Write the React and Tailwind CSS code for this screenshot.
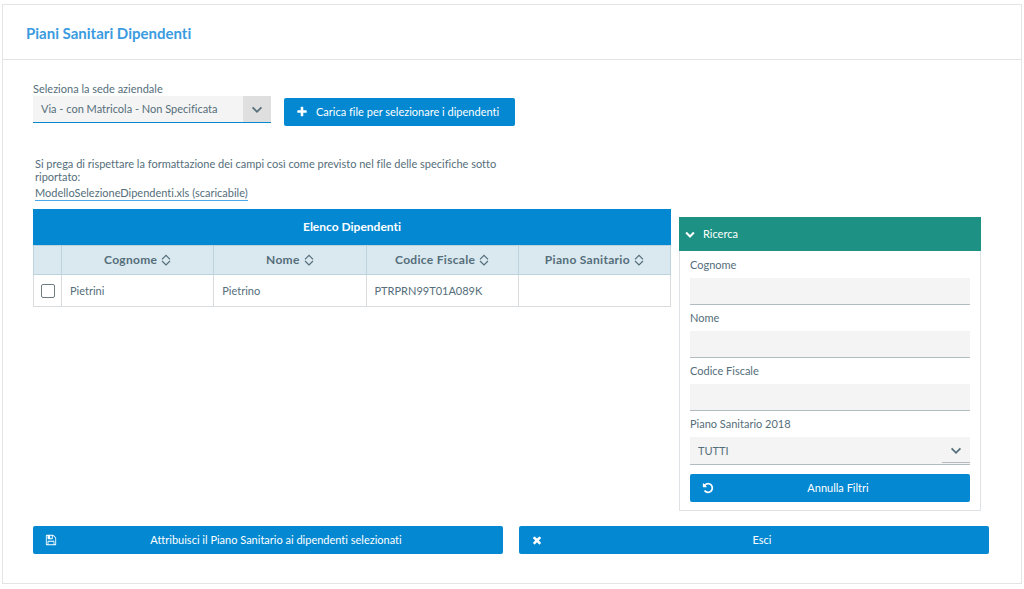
import React, { useState } from "react";
import clsx from "clsx";

const ICONS = {
  plus: "M1600 736v192q0 40-28 68t-68 28h-416v416q0 40-28 68t-68 28h-192q-40 0-68-28t-28-68v-416h-416q-40 0-68-28t-28-68v-192q0-40 28-68t68-28h416v-416q0-40 28-68t68-28h192q40 0 68 28t28 68v416h416q40 0 68 28t28 68z",
  close:
    "M1490 1322q0 40-28 68l-136 136q-28 28-68 28t-68-28l-294-294-294 294q-28 28-68 28t-68-28l-136-136q-28-28-28-68t28-68l294-294-294-294q-28-28-28-68t28-68l136-136q28-28 68-28t68 28l294 294 294-294q28-28 68-28t68 28l136 136q28 28 28 68t-28 68l-294 294 294 294q28 28 28 68z",
  undo: "M1664 896q0 156-61 298t-164 245-245 164-298 61q-172 0-327-72.5t-264-204.5q-7-10-6.5-22.5t8.5-20.5l137-138q10-9 25-9 16 2 23 12 73 95 179 147t225 52q104 0 198.5-40.5t163.5-109.5 109.5-163.5 40.5-198.5-40.5-198.5-109.5-163.5-163.5-109.5-198.5-40.5q-98 0-188 35.5t-160 101.5l137 138q31 30 14 69-17 40-59 40h-448q-26 0-45-19t-19-45v-448q0-42 40-59 39-17 69 14l130 129q107-101 244.5-156.5t284.5-55.5q156 0 298 61t245 164 164 245 61 298z",
  save: "M512 1536h768v-384h-768v384zm896 0h128v-896q0-14-10-38.5t-20-34.5l-281-281q-10-10-34-20t-39-10v416q0 40-28 68t-68 28h-576q-40 0-68-28t-28-68v-416h-128v1280h128v-416q0-40 28-68t68-28h832q40 0 68 28t28 68v416zm-384-928v-320q0-13-9.5-22.5t-22.5-9.5h-192q-13 0-22.5 9.5t-9.5 22.5v320q0 13 9.5 22.5t22.5 9.5h192q13 0 22.5-9.5t9.5-22.5zm640 32v928q0 40-28 68t-68 28h-1344q-40 0-68-28t-28-68v-1344q0-40 28-68t68-28h928q40 0 88 20t76 48l280 280q28 28 48 76t20 88z",
  chevron:
    "M1683 808l-742 741q-19 19-45 19t-45-19l-742-741q-19-19-19-45.5t19-45.5l166-165q19-19 45-19t45 19l531 531 531-531q19-19 45-19t45 19l166 165q19 19 19 45.5t-19 45.5z",
};

const Icon = ({ name, className }) => (
  <svg
    viewBox="0 0 1792 1792"
    fill="currentColor"
    aria-hidden="true"
    className={clsx("shrink-0", className)}
  >
    <path d={ICONS[name]} />
  </svg>
);

const ArrowDown = () => (
  <svg
    viewBox="0 0 12 8"
    fill="none"
    stroke="currentColor"
    strokeWidth="1.8"
    aria-hidden="true"
    className="mt-0.5 h-2 w-3"
  >
    <path d="M1.6 1.4 6 5.8l4.4-4.4" />
  </svg>
);

const SortIcon = () => (
  <svg
    viewBox="0 0 10 12"
    fill="none"
    stroke="currentColor"
    strokeWidth="1.2"
    aria-hidden="true"
    className="h-3 w-2.5"
  >
    <path d="M1 5.4 5 1.4l4 4M1 7l4 4 4-4" />
  </svg>
);

const WideButton = ({ icon, children }) => (
  <button
    type="button"
    className="flex h-7 w-full items-center rounded-xs bg-[#0388d1] pr-2 pl-3 text-white"
  >
    <Icon name={icon} className="size-3" />
    <span className="flex-1">{children}</span>
  </button>
);

const columns = ["Cognome", "Nome", "Codice Fiscale", "Piano Sanitario"];

const employees = [
  {
    surname: "Pietrini",
    name: "Pietrino",
    fiscalCode: "PTRPRN99T01A089K",
    plan: "",
  },
];

const filters = [
  { id: "surname", label: "Cognome" },
  { id: "name", label: "Nome" },
  { id: "fiscalCode", label: "Codice Fiscale" },
];

const emptyFilters = { surname: "", name: "", fiscalCode: "" };

const EmployeesTable = ({ rows }) => (
  <table className="w-full table-fixed border-collapse">
    <caption className="h-9 bg-[#0388d1] text-center text-[12px] leading-9 font-bold text-white">
      Elenco Dipendenti
    </caption>
    <thead>
      <tr className="h-[29px] bg-[#dae8ef] text-[12px]">
        <th className="w-7 border border-[#bdd3dd]" />
        {columns.map((column) => (
          <th
            key={column}
            className="border border-[#bdd3dd] p-0 font-bold tracking-wide"
          >
            <span className="flex items-center justify-center gap-1">
              {column}
              <SortIcon />
            </span>
          </th>
        ))}
      </tr>
    </thead>
    <tbody>
      {rows.map((row) => (
        <tr key={row.fiscalCode} className="h-8">
          <td className="border border-[#d8dcde] p-0">
            <input
              type="checkbox"
              aria-label={`Seleziona ${row.surname} ${row.name}`}
              className="mx-auto block size-3.5 appearance-none rounded-xs border border-[#6f7c84] bg-white checked:bg-[#0388d1]"
            />
          </td>
          <td className="border border-[#d8dcde] px-2 py-0">{row.surname}</td>
          <td className="border border-[#d8dcde] px-2 py-0">{row.name}</td>
          <td className="border border-[#d8dcde] px-2 py-0">
            {row.fiscalCode}
          </td>
          <td className="border border-[#d8dcde] px-2 py-0">{row.plan}</td>
        </tr>
      ))}
    </tbody>
  </table>
);

const SearchPanel = ({ values, onChange }) => (
  <section>
    <h2 className="flex h-[34px] items-center gap-2 bg-[#1d9284] px-1.5 text-white">
      <Icon name="chevron" className="size-2.5" />
      Ricerca
    </h2>
    <div className="border border-t-0 border-[#dfe3e5] px-2.5 pt-1.5 pb-2">
      <div className="flex flex-col gap-[5px]">
        {filters.map(({ id, label }) => (
          <div key={id} className="flex flex-col gap-[5px]">
            <label htmlFor={id} className="leading-4">
              {label}
            </label>
            <input
              id={id}
              type="text"
              value={values[id]}
              onChange={(e) => onChange(id, e.target.value)}
              className="h-[27px] w-full border-b border-[#b0bcc2] bg-[#f4f4f4] px-2 outline-none"
            />
          </div>
        ))}
        <div className="flex flex-col gap-[5px]">
          <label htmlFor="plan" className="leading-4">
            Piano Sanitario 2018
          </label>
          <div className="relative">
            <select
              id="plan"
              className="block h-7 w-full appearance-none border-b border-[#b0bcc2] bg-[#f4f4f4] px-2 outline-none"
            >
              <option>TUTTI</option>
            </select>
            <span className="pointer-events-none absolute top-0 right-0 flex h-[26px] w-7 items-center justify-center border-b border-[#b0bcc2]">
              <ArrowDown />
            </span>
          </div>
        </div>
      </div>
      <div className="mt-[9px]">
        <WideButton icon="undo">Annulla Filtri</WideButton>
      </div>
    </div>
  </section>
);

const App = () => {
  const [values, setValues] = useState(emptyFilters);

  const changeFilter = (id, value) => setValues({ ...values, [id]: value });

  return (
    <main className="bg-white px-0.5 py-1 font-['Lato',sans-serif] text-[11px] leading-[14px] text-[#546e7a] [font-variant-ligatures:none]">
      <div className="border border-[#e2e4e5]">
        <h1 className="border-b border-[#e2e4e5] px-[23px] pt-[18px] pb-4 text-[15px] leading-5 font-bold text-[#3a9be0]">
          Piani Sanitari Dipendenti
        </h1>
        <div className="pt-[22px] pr-8 pb-[29px] pl-[30px]">
          <div className="flex items-end gap-[13px]">
            <div className="w-[238px]">
              <label htmlFor="office" className="block">
                Seleziona la sede aziendale
              </label>
              <div className="relative">
                <select
                  id="office"
                  className="block h-[27px] w-full appearance-none border-b border-[#0388d1] bg-[#f4f4f4] pr-8 pl-2 outline-none"
                >
                  <option>Via - con Matricola - Non Specificata</option>
                </select>
                <span className="pointer-events-none absolute top-0 right-0 flex h-[26px] w-7 items-center justify-center bg-[#dfdfdf]">
                  <ArrowDown />
                </span>
              </div>
            </div>
            <button
              type="button"
              className="-mb-[3px] flex h-7 items-center gap-2 rounded-xs bg-[#0388d1] pr-4 pl-3 text-white"
            >
              <Icon name="plus" className="size-3" />
              Carica file per selezionare i dipendenti
            </button>
          </div>

          <div className="mt-[34px] max-w-[480px] px-0.5">
            <p className="leading-[13px]">
              Si prega di rispettare la formattazione dei campi così come
              previsto nel file delle specifiche sotto riportato:
            </p>
            <a
              href="#modello"
              className="mt-[3px] inline-block border-b border-[#4aa8e8] leading-[14px]"
            >
              ModelloSelezioneDipendenti.xls (scaricabile)
            </a>
          </div>

          <div className="mt-2 grid grid-cols-[638fr_302fr] items-start gap-2 pr-2">
            <EmployeesTable rows={employees} />
            <div className="pt-2">
              <SearchPanel values={values} onChange={changeFilter} />
            </div>
          </div>

          <div className="mt-[15px] grid grid-cols-2 gap-4">
            <WideButton icon="save">
              Attribuisci il Piano Sanitario ai dipendenti selezionati
            </WideButton>
            <WideButton icon="close">Esci</WideButton>
          </div>
        </div>
      </div>
    </main>
  );
};

export default App;
